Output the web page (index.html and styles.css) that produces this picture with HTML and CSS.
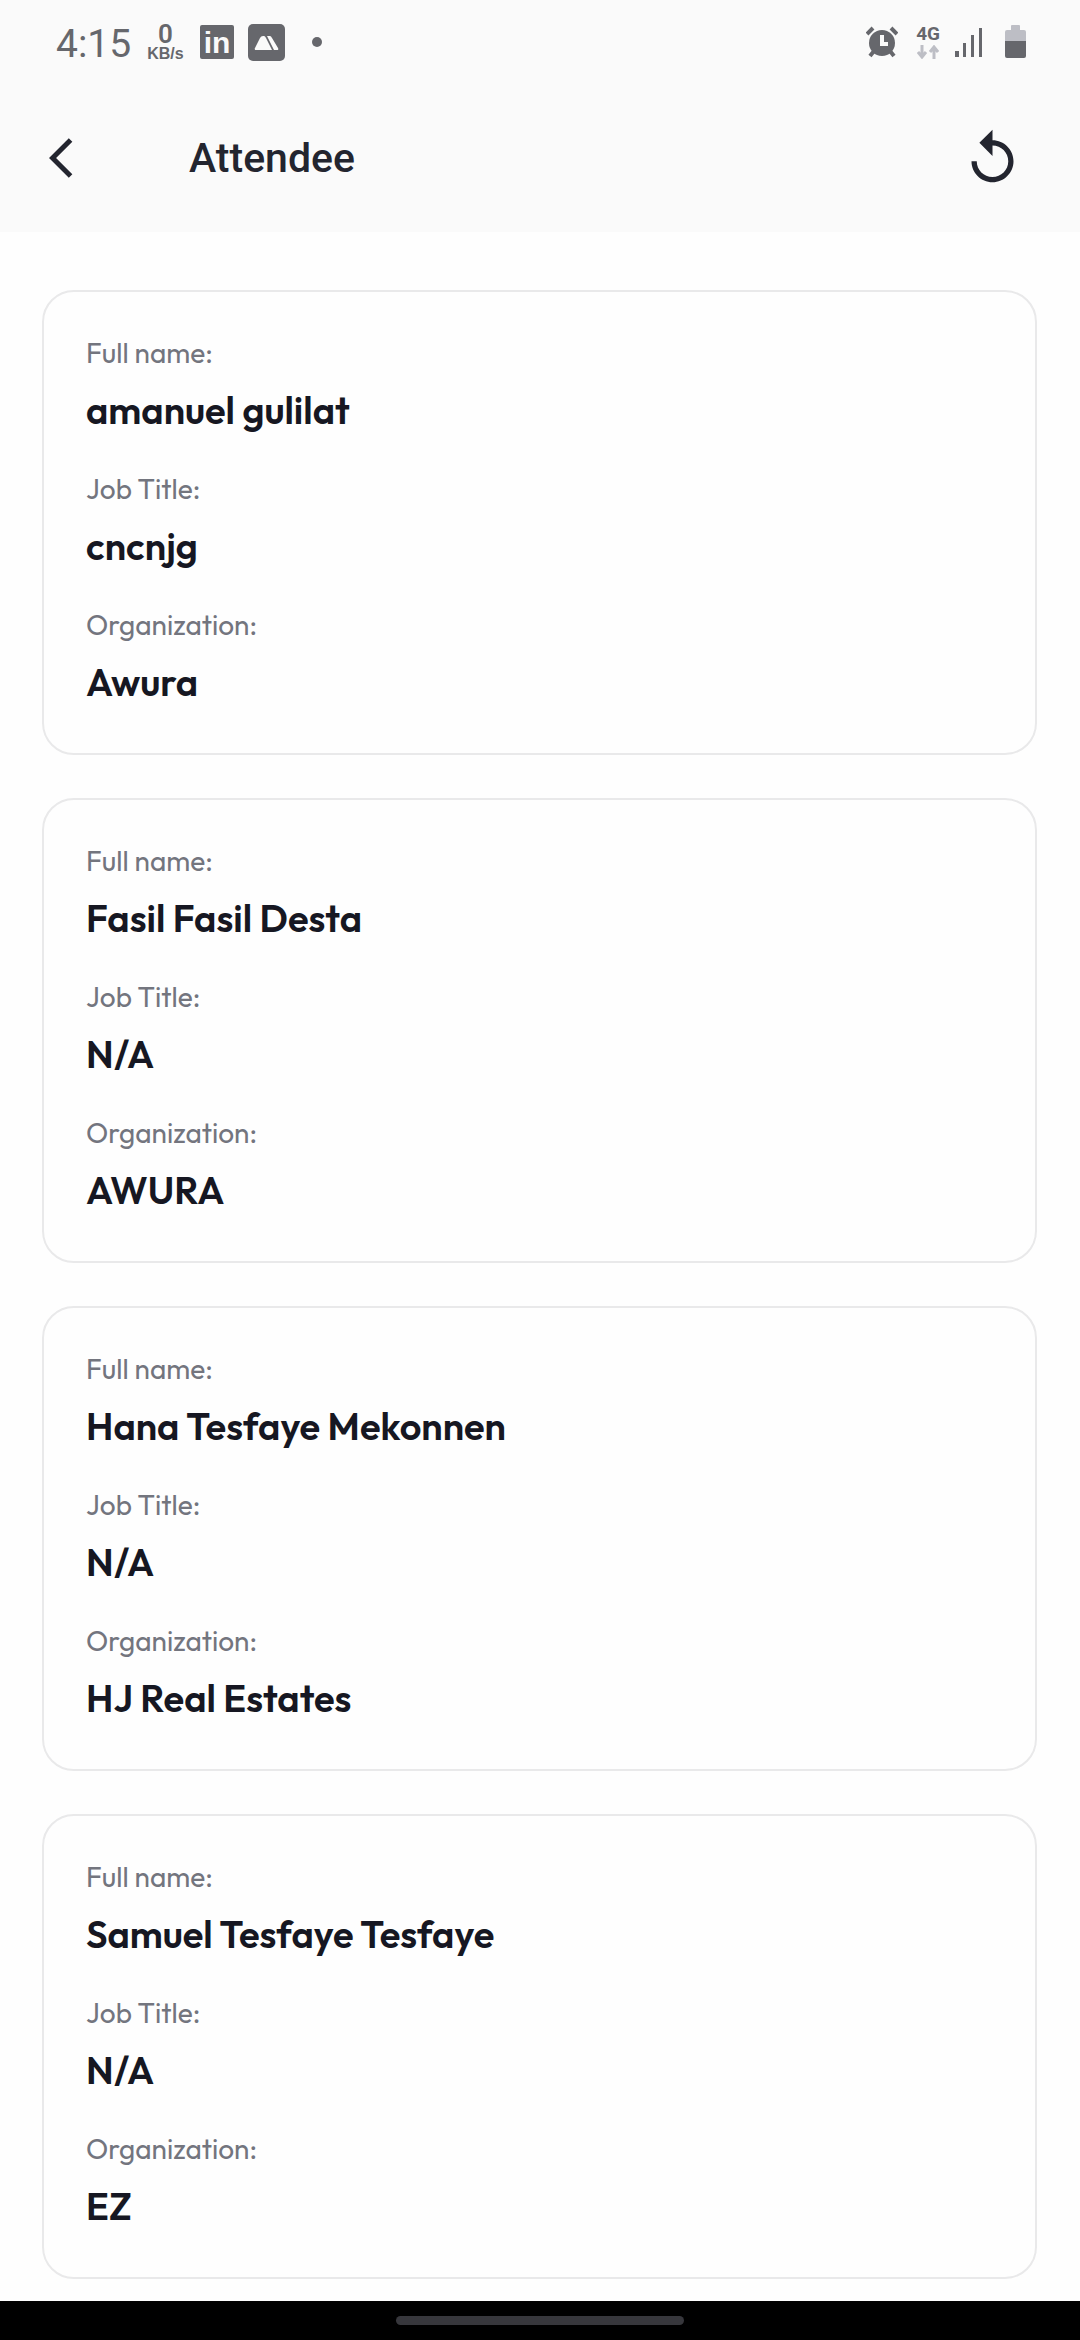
FILE: index.html
```html
<!DOCTYPE html>
<html lang="en">
<head>
    <meta charset="UTF-8">
    <meta name="viewport" content="width=device-width, initial-scale=1.0">
    <title>Attendee</title>
    <link rel="stylesheet" href="styles.css">
</head>
<body>
    <header class="header">
        <div class="status-bar">
            <span class="time">4:15</span>
            <div class="net-speed">
                <span class="net-value">0</span>
                <span class="net-unit">KB/s</span>
            </div>
            <svg class="linkedin-icon" width="34" height="34" viewBox="0 0 34 34">
                <rect width="34" height="34" rx="2" fill="#66676c"/>
                <text class="linkedin-text" x="17" y="28" text-anchor="middle">in</text>
            </svg>
            <svg class="app-icon" width="37" height="37" viewBox="0 0 37 37">
                <rect width="37" height="37" rx="5" fill="#66676c"/>
                <path d="M8 26q-2 0-1-2l5-10q1-2 3-2h1q1 0 2 2l6 12z" fill="#fafafa"/>
                <path d="M19 12h3q1 0 2 2l6 10q1 2-1 2h-3z" fill="#fafafa"/>
            </svg>
            <span class="dot"></span>

            <div class="status-right">
                <svg width="32" height="32" viewBox="0 0 32 32">
                    <path d="M1 8l6-6M31 8l-6-6" stroke="#66676c" stroke-width="4"/>
                    <path d="M8 25l-4 5M24 25l4 5" stroke="#66676c" stroke-width="4"/>
                    <circle cx="16" cy="17" r="13" fill="#66676c"/>
                    <path d="M16 9v9h6" fill="none" stroke="#fafafa" stroke-width="4"/>
                </svg>
                <div class="network">
                    <span>4G</span>
                    <svg width="22" height="14" viewBox="0 0 22 14">
                        <path d="M5 0v11M1 7l4 5 4-5M17 14V3M13 7l4-5 4 5" fill="none" stroke="#bdbec5" stroke-width="3"/>
                    </svg>
                </div>
                <svg class="signal" width="28" height="32" viewBox="0 0 28 32">
                    <path d="M0 25h4v6H0zM8 17h3v14H8zM16 9h3v22h-3zM24 2h3v29h-3z" fill="#66676c"/>
                </svg>
                <svg class="battery" width="21" height="34" viewBox="0 0 21 34">
                    <path d="M6 1q0-1 1-1h7q1 0 1 1v4h4q2 0 2 2v10H0V7q0-2 2-2h4z" fill="#bdbec5"/>
                    <path d="M0 16h21v15q0 2-2 2H2q-2 0-2-2z" fill="#66676c"/>
                </svg>
            </div>
        </div>

        <div class="app-bar">
            <button type="button" class="icon-btn" aria-label="Back">
                <svg width="48" height="48" viewBox="0 0 24 24">
                    <path d="M11.67 3.87L9.9 2.1 0 12l9.9 9.9 1.77-1.77L3.54 12z" fill="#23252f"/>
                </svg>
            </button>
            <h1 class="title">Attendee</h1>
            <button type="button" class="icon-btn" aria-label="Reload">
                <svg width="63" height="63" viewBox="0 0 24 24">
                    <path d="M12 5V1L7 6l5 5V7c3.31 0 6 2.69 6 6s-2.69 6-6 6-6-2.69-6-6H4c0 4.42 3.58 8 8 8s8-3.58 8-8-3.58-8-8-8z" fill="#23252f"/>
                </svg>
            </button>
        </div>
    </header>

    <main class="attendees">
        <dl class="card">
            <div class="field">
                <dt>Full name:</dt>
                <dd>amanuel gulilat</dd>
            </div>
            <div class="field">
                <dt>Job Title:</dt>
                <dd>cncnjg</dd>
            </div>
            <div class="field">
                <dt>Organization:</dt>
                <dd>Awura</dd>
            </div>
        </dl>

        <dl class="card">
            <div class="field">
                <dt>Full name:</dt>
                <dd>Fasil Fasil Desta</dd>
            </div>
            <div class="field">
                <dt>Job Title:</dt>
                <dd>N/A</dd>
            </div>
            <div class="field">
                <dt>Organization:</dt>
                <dd>AWURA</dd>
            </div>
        </dl>

        <dl class="card">
            <div class="field">
                <dt>Full name:</dt>
                <dd>Hana Tesfaye Mekonnen</dd>
            </div>
            <div class="field">
                <dt>Job Title:</dt>
                <dd>N/A</dd>
            </div>
            <div class="field">
                <dt>Organization:</dt>
                <dd>HJ Real Estates</dd>
            </div>
        </dl>

        <dl class="card">
            <div class="field">
                <dt>Full name:</dt>
                <dd>Samuel Tesfaye Tesfaye</dd>
            </div>
            <div class="field">
                <dt>Job Title:</dt>
                <dd>N/A</dd>
            </div>
            <div class="field">
                <dt>Organization:</dt>
                <dd>EZ</dd>
            </div>
        </dl>
    </main>

    <footer class="nav-bar">
        <span class="nav-handle"></span>
    </footer>
</body>
</html>
```
FILE: styles.css
```css
:root {
    --color-bar: #fafafa;
    --color-status: #66676c;
    --color-title: #23252f;
    --color-label: #73757e;
    --color-value: #161722;
    --color-border: #e9e9ea;
}

* {
    box-sizing: border-box;
}

body {
    font-family: 'Outfit', 'Lato', sans-serif;
    margin: 0;
    min-height: 100vh;
    display: flex;
    flex-direction: column;
    background-color: #fefefe;
    color: var(--color-value);
}

.header {
    background-color: var(--color-bar);
    font-family: 'Roboto', sans-serif;
}

/* Status bar */
.status-bar {
    display: flex;
    align-items: center;
    height: 84px;
    padding: 0 54px 0 56px;
    color: var(--color-status);
}

.time {
    font-size: 39px;
    line-height: 40px;
    padding-top: 4px;
    font-weight: 400;
}

.net-speed {
    display: flex;
    flex-direction: column;
    align-items: center;
    margin-left: 16px;
    font-weight: 600;
}

.net-value {
    font-size: 26px;
    line-height: 24px;
}

.net-unit {
    font-family: 'Liberation Sans', sans-serif;
    font-size: 16px;
    line-height: 16px;
    font-weight: bold;
}

.linkedin-icon {
    margin-left: 16px;
}

.linkedin-text {
    font-family: 'Liberation Sans', sans-serif;
    font-size: 30px;
    font-weight: bold;
    fill: var(--color-bar);
}

.app-icon {
    margin-left: 14px;
}

.dot {
    width: 10px;
    height: 10px;
    margin-left: 27px;
    border-radius: 50%;
    background-color: var(--color-status);
}

.status-right {
    display: flex;
    align-items: center;
    margin-left: auto;
}

.network {
    display: flex;
    flex-direction: column;
    align-items: center;
    gap: 2px;
    margin-left: 18px;
    font-size: 19px;
    line-height: 18px;
    font-weight: bold;
}

.signal {
    margin-left: 15px;
}

.battery {
    margin-left: 22px;
}

/* App bar */
.app-bar {
    display: flex;
    align-items: center;
    height: 148px;
    padding: 0 56px 0 49px;
}

.icon-btn {
    display: flex;
    padding: 0;
    border: none;
    background: none;
    cursor: pointer;
}

.title {
    flex: 1;
    margin: 0 0 0 92px;
    font-size: 41px;
    line-height: 48px;
    font-weight: 500;
    color: var(--color-title);
}

/* Attendee list */
.attendees {
    flex: 1;
    display: flex;
    flex-direction: column;
    gap: 43px;
    padding: 58px 43px 22px 42px;
}

.card {
    display: flex;
    flex-direction: column;
    gap: 36px;
    margin: 0;
    padding: 42px 42px 47px;
    border: 2px solid var(--color-border);
    border-radius: 32px;
}

.field {
    display: flex;
    flex-direction: column;
    gap: 14px;
}

dt {
    font-size: 28px;
    line-height: 38px;
    font-weight: 400;
    color: var(--color-label);
}

dd {
    margin: 0;
    font-size: 38px;
    line-height: 48px;
    font-weight: 600;
}

/* Gesture bar */
.nav-bar {
    display: flex;
    justify-content: center;
    align-items: center;
    height: 39px;
    background-color: #000;
}

.nav-handle {
    width: 288px;
    height: 9px;
    border-radius: 5px;
    background-color: #37373c;
}
```
